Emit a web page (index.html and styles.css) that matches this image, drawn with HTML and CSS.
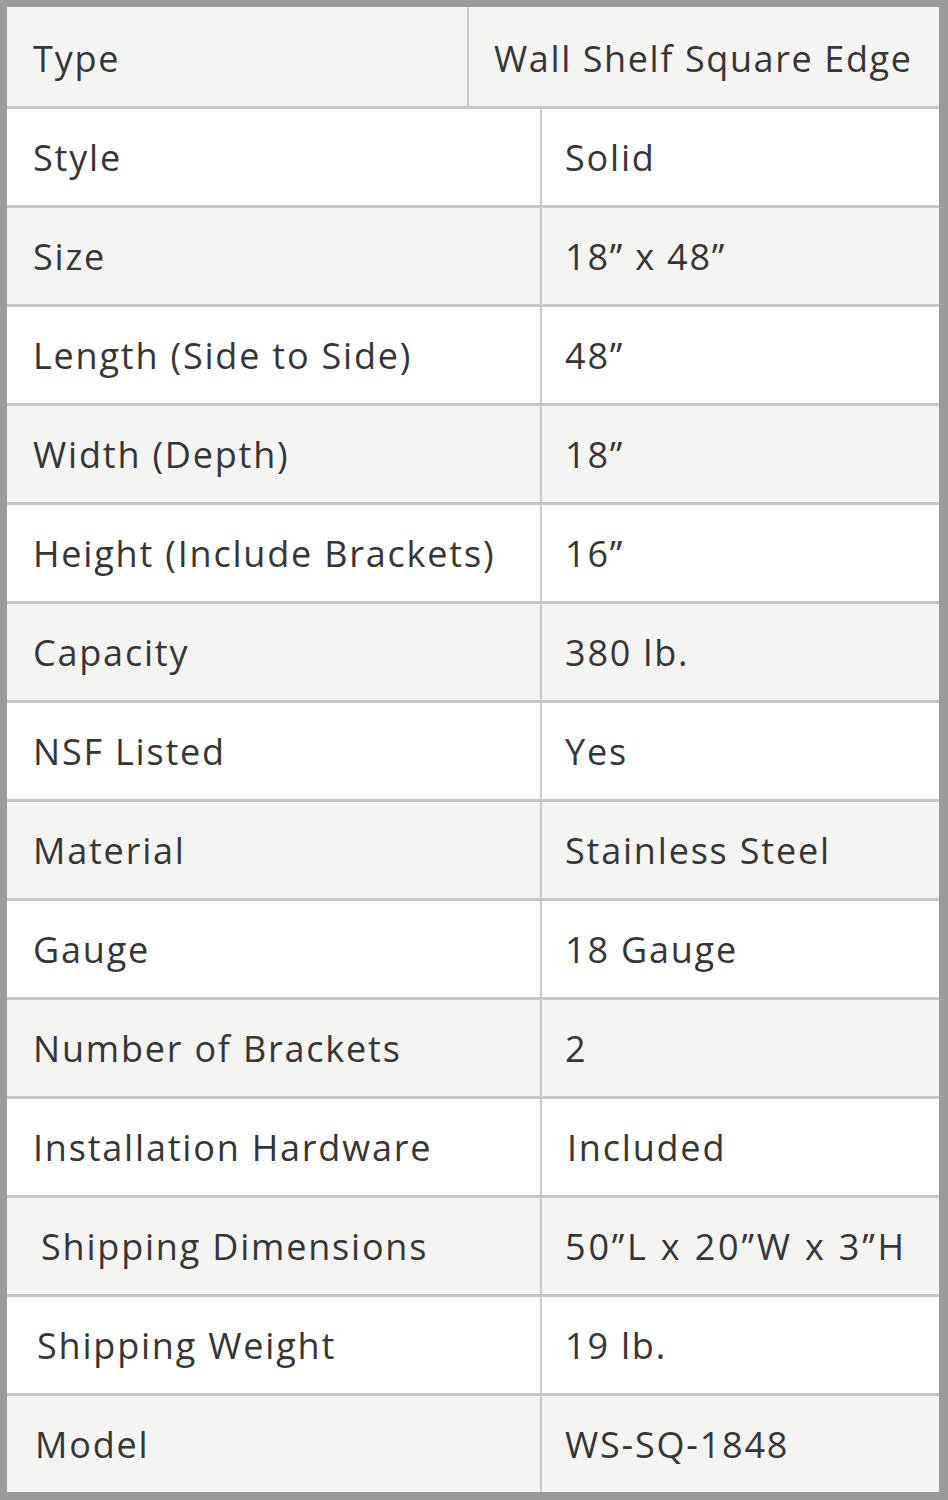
FILE: index.html
```html
<!DOCTYPE html>
<html lang="en">
<head>
<meta charset="utf-8">
<title>Wall Shelf Specifications</title>
<link rel="stylesheet" href="styles.css">
</head>
<body>
<div class="spec">
  <div class="row row-head odd">
    <div class="key">Type</div>
    <div class="val">Wall Shelf Square Edge</div>
  </div>
  <div class="row even">
    <div class="key">Style</div>
    <div class="val">Solid</div>
  </div>
  <div class="row odd">
    <div class="key">Size</div>
    <div class="val">18” x 48”</div>
  </div>
  <div class="row even">
    <div class="key">Length (Side to Side)</div>
    <div class="val">48”</div>
  </div>
  <div class="row odd">
    <div class="key">Width (Depth)</div>
    <div class="val">18”</div>
  </div>
  <div class="row even">
    <div class="key">Height (Include Brackets)</div>
    <div class="val">16”</div>
  </div>
  <div class="row odd">
    <div class="key">Capacity</div>
    <div class="val">380 lb.</div>
  </div>
  <div class="row even">
    <div class="key">NSF Listed</div>
    <div class="val">Yes</div>
  </div>
  <div class="row odd">
    <div class="key">Material</div>
    <div class="val">Stainless Steel</div>
  </div>
  <div class="row even">
    <div class="key">Gauge</div>
    <div class="val">18 Gauge</div>
  </div>
  <div class="row odd">
    <div class="key">Number of Brackets</div>
    <div class="val">2</div>
  </div>
  <div class="row even">
    <div class="key">Installation Hardware</div>
    <div class="val shift-2">Included</div>
  </div>
  <div class="row odd">
    <div class="key shift-8">Shipping Dimensions</div>
    <div class="val wide">50”L x 20”W x 3”H</div>
  </div>
  <div class="row even">
    <div class="key shift-4">Shipping Weight</div>
    <div class="val">19 lb.</div>
  </div>
  <div class="row odd row-last">
    <div class="key shift-2">Model</div>
    <div class="val">WS-SQ-1848</div>
  </div>
</div>
</body>
</html>
```

FILE: styles.css
```css
html, body {
  margin: 0;
  padding: 0;
  background: #ffffff;
}

.spec {
  width: 948px;
  height: 1500px;
  box-sizing: border-box;
  border-style: solid;
  border-color: #9b9b9b;
  border-width: 7px 9px 8px 7px;
  display: flex;
  flex-direction: column;
  font-family: "Open Sans", "Liberation Sans", sans-serif;
  font-size: 36px;
  letter-spacing: 1.8px;
  color: #363636;
}

.row {
  display: grid;
  grid-template-columns: 533px 1fr;
  height: 96px;
  border-top: 3px solid #c6c6c6;
}

.row-head {
  grid-template-columns: 460px 1fr;
  height: 99px;
  border-top: none;
}

.odd { background: #f4f4f3; }
.even { background: #ffffff; }

.key, .val {
  display: flex;
  align-items: center;
  white-space: nowrap;
}

.key {
  padding-left: 26px;
}

.val {
  border-left: 2px solid #c9c9c9;
  padding-left: 23px;
}

.row-head .key,
.row-head .val {
  padding-top: 4px;
}

.row-head .val {
  padding-left: 25px;
  letter-spacing: 1.6px;
}

.val.wide {
  letter-spacing: 2.8px;
}

.shift-2 { padding-left: 28px; }
.val.shift-2 { padding-left: 25px; }
.shift-4 { padding-left: 30px; }
.shift-8 { padding-left: 34px; }
```
